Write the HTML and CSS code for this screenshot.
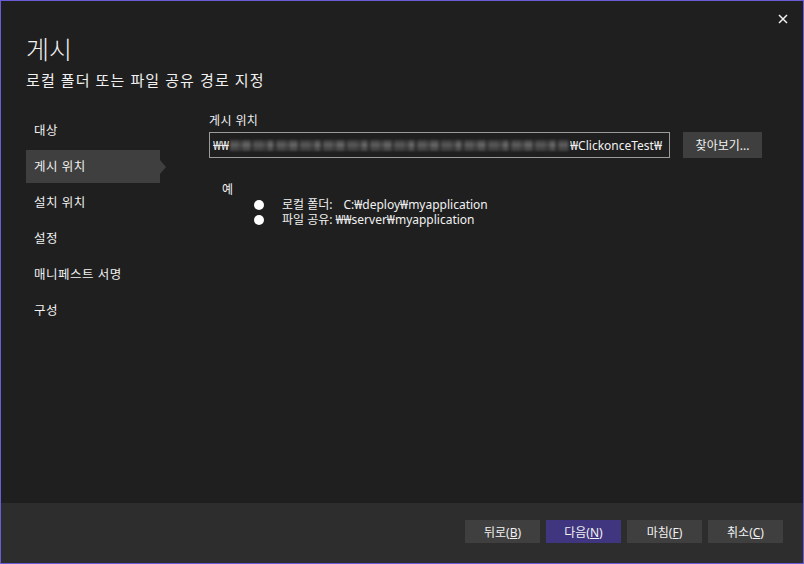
FILE: index.html
```html
<!DOCTYPE html>
<html>
	<head>
		<title>게시</title>
		<link rel="stylesheet" href="styles.css">
	</head>
	<body>
		<div class="window">
			<div class="main">
				<button class="close_btn" title="닫기">
					<svg width="10" height="10" viewBox="0 0 10 10"><path d="M1 1L9 9M9 1L1 9" stroke="#f1f1f1" stroke-width="1.5"/></svg>
				</button>

				<div class="header">
					<h1>게시</h1>
					<h2>로컬 폴더 또는 파일 공유 경로 지정</h2>
				</div>

				<div class="content">
					<ul class="menu">
						<li>대상</li>
						<li class="selected">게시 위치</li>
						<li>설치 위치</li>
						<li>설정</li>
						<li>매니페스트 서명</li>
						<li>구성</li>
					</ul>

					<div class="panel">
						<div class="label">게시 위치</div>
						<div class="row">
							<div class="path_box">
								<span>₩₩</span><span class="blurred"></span><span>₩ClickonceTest₩</span>
							</div>
							<button class="boton">찾아보기...</button>
						</div>

						<div class="examples">
							<div class="ex_title">예</div>
							<ul>
								<li><span class="bullet"></span><span class="ex_name">로컬 폴더:</span><span class="ex_path">C:₩deploy₩myapplication</span></li>
								<li><span class="bullet"></span><span class="ex_name">파일 공유:</span><span>₩₩server₩myapplication</span></li>
							</ul>
						</div>
					</div>
				</div>
			</div>

			<div class="footer">
				<button class="boton_pie">뒤로(<u>B</u>)</button>
				<button class="boton_pie boton_principal">다음(<u>N</u>)</button>
				<button class="boton_pie">마침(<u>F</u>)</button>
				<button class="boton_pie">취소(<u>C</u>)</button>
			</div>
		</div>
	</body>
</html>
```

FILE: styles.css
```css
	body
	{
		margin: 0;
		background-color: #1f1f1f;
		font-family: "Noto Sans", "Noto Sans CJK KR", sans-serif;
		color: #f1f1f1;
	}

	.window
	{
		width: 804px;
		height: 564px;
		box-sizing: border-box;
		border: 1px solid #6a5bd6;
		display: flex;
		flex-direction: column;
		background-color: #1f1f1f;
	}

	.main
	{
		flex: 1;
		position: relative;
	}

	.close_btn
	{
		position: absolute;
		top: 11px;
		right: 12px;
		width: 16px;
		height: 14px;
		padding: 0;
		border: 0;
		background: none;
		display: flex;
		align-items: center;
		justify-content: center;
	}

	.header
	{
		padding: 31px 0 0 25px;
	}

	h1
	{
		margin: 0;
		font-size: 25px;
		font-weight: 300;
		line-height: 34px;
	}

	h2
	{
		margin: 0;
		font-size: 15px;
		font-weight: normal;
		letter-spacing: 1.1px;
		line-height: 20px;
		margin-top: 4px;
	}

	.content
	{
		display: flex;
		padding-top: 24px;
	}

	.menu
	{
		list-style: none;
		margin: 0;
		padding: 0 0 0 25px;
		width: 134px;
		font-size: 12.5px;
		letter-spacing: 0.5px;
	}

	.menu li
	{
		height: 33px;
		line-height: 33px;
		padding-left: 8px;
		margin-bottom: 3px;
		position: relative;
	}

	.menu li.selected
	{
		background-color: #3f3f3f;
	}

	.menu li.selected::after
	{
		content: "";
		position: absolute;
		right: -6px;
		top: 10px;
		border-top: 7px solid transparent;
		border-bottom: 7px solid transparent;
		border-left: 6px solid #3f3f3f;
	}

	.panel
	{
		margin-left: 49px;
		font-size: 12px;
	}

	.label
	{
		line-height: 16px;
		margin-top: -1px;
		letter-spacing: 0.4px;
	}

	.row
	{
		display: flex;
		gap: 13px;
		margin-top: 3px;
	}

	.path_box
	{
		width: 461px;
		height: 26px;
		box-sizing: border-box;
		border: 1px solid #9b9b9b;
		padding: 0 7px 0 3px;
		display: flex;
		align-items: center;
		white-space: nowrap;
		overflow: hidden;
	}

	.blurred
	{
		flex: 1;
		height: 11px;
		margin: 0 1px;
		background:
			repeating-linear-gradient(0deg, rgba(31,31,31,0.35) 0 4px, transparent 4px 8px),
			repeating-linear-gradient(90deg, #5a5a5a 0 8px, #4a4a4a 8px 13px, #636363 13px 20px, #3d3d3d 20px 24px, #555 24px 33px, #474747 33px 38px, #666 38px 43px, #3a3a3a 43px 47px);
		filter: blur(1px);
	}

	.boton
	{
		width: 79px;
		height: 26px;
		border: 0;
		background-color: #3f3f3f;
		color: #f1f1f1;
		font-family: "Noto Sans", "Noto Sans CJK KR", sans-serif;
		font-size: 12px;
		padding: 0;
	}

	.examples
	{
		margin-top: 23px;
		padding-left: 13px;
	}

	.ex_title
	{
		line-height: 18px;
	}

	.examples ul
	{
		list-style: none;
		margin: -2px 0 0 0;
		padding: 0 0 0 32px;
	}

	.examples li
	{
		display: flex;
		align-items: center;
		height: 15px;
		line-height: 15px;
		white-space: nowrap;
	}

	.bullet
	{
		width: 10px;
		height: 10px;
		border-radius: 50%;
		background-color: #ffffff;
		margin-right: 18px;
	}

	.ex_name
	{
		margin-right: 3px;
	}

	.ex_path
	{
		margin-left: 8px;
	}

	.footer
	{
		height: 60px;
		background-color: #2d2d2d;
		display: flex;
		justify-content: flex-end;
		gap: 6px;
		padding: 17px 20px 0 0;
		box-sizing: border-box;
	}

	.boton_pie
	{
		width: 75px;
		height: 23px;
		border: 0;
		padding: 0;
		background-color: #3f3f3f;
		color: #f1f1f1;
		font-family: "Noto Sans", "Noto Sans CJK KR", sans-serif;
		font-size: 12px;
	}

	.boton_pie.boton_principal
	{
		background-color: #40367f;
	}
```
